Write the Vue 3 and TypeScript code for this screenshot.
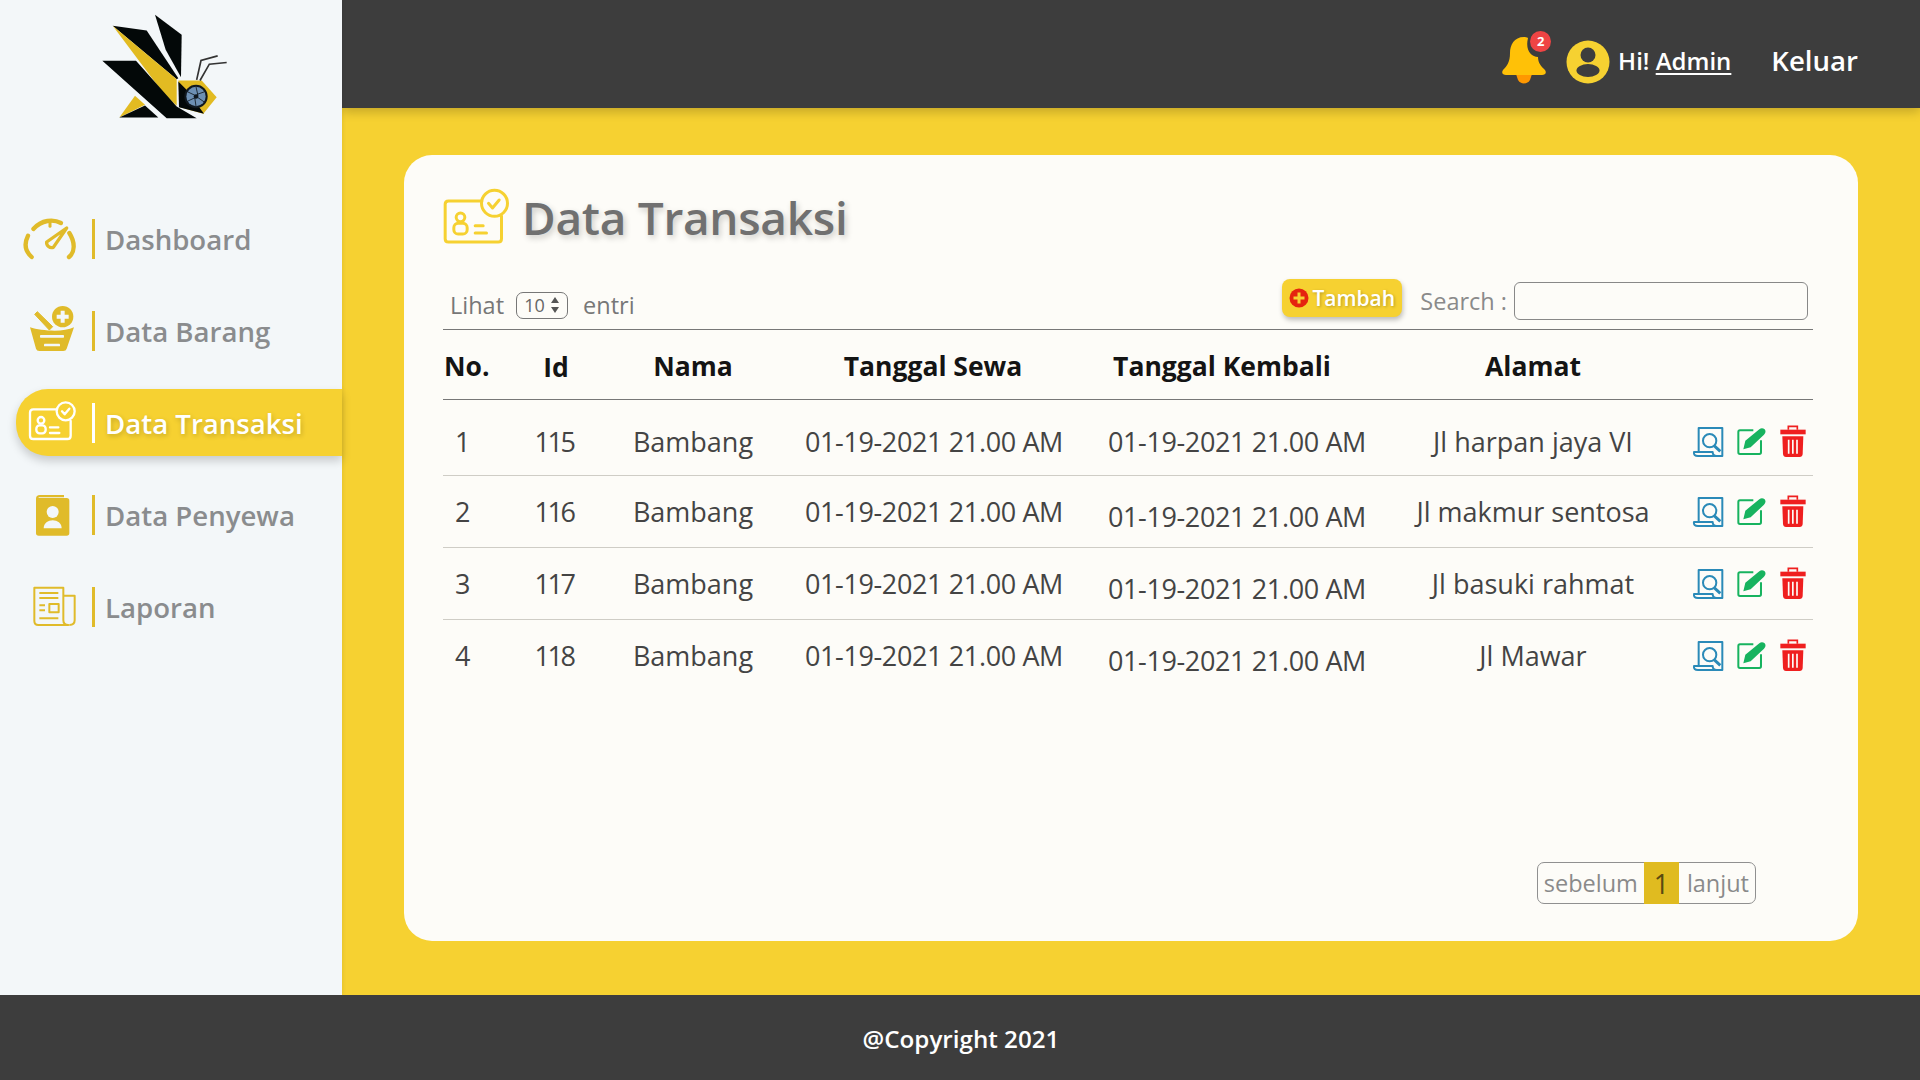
<script setup lang="ts">
interface NavItem { label: string; icon: string; active?: boolean }
interface Row { no: number; id: number; nama: string; alamat: string }

const navItems: NavItem[] = [
  { label: 'Dashboard', icon: 'gauge' },
  { label: 'Data Barang', icon: 'basket' },
  { label: 'Data Transaksi', icon: 'card', active: true },
  { label: 'Data Penyewa', icon: 'book' },
  { label: 'Laporan', icon: 'news' },
]

const date = '01-19-2021 21.00 AM'
const rows: Row[] = [
  { no: 1, id: 115, nama: 'Bambang', alamat: 'Jl harpan jaya VI' },
  { no: 2, id: 116, nama: 'Bambang', alamat: 'Jl makmur sentosa' },
  { no: 3, id: 117, nama: 'Bambang', alamat: 'Jl basuki rahmat' },
  { no: 4, id: 118, nama: 'Bambang', alamat: 'Jl Mawar' },
]
</script>

<template>
  <div class="page">
    <div class="main">
      <aside class="sidebar">
        <svg class="logo" viewBox="300 40 390 320">
          <polygon points="465,45 545,105 543,232 497,150" fill="#030808" />
          <polygon points="338,78 440,92 535,235 530,238" fill="#030808" />
          <polygon points="338,78 530,238 530,318 490,280" fill="#e2bb22" />
          <polygon points="307,183 408,183 530,320 590,355 500,355" fill="#030808" />
          <polygon points="405,288 435,315 358,353" fill="#e2bb22" />
          <polygon points="435,317 475,353 358,353" fill="#030808" />
          <polygon points="535,242 605,242 650,292 610,342 540,322" fill="#e2bb22" />
          <polygon points="535,245 562,272 600,325 612,342 537,322" fill="#030808" />
          <circle cx="588" cy="290" r="35" fill="#10181f" />
          <circle cx="588" cy="290" r="29" fill="#6d90b4" />
          <g stroke="#10181f" stroke-width="2.5">
            <line x1="588" y1="261" x2="594" y2="288" />
            <line x1="613" y1="276" x2="590" y2="284" />
            <line x1="612" y1="306" x2="592" y2="292" />
            <line x1="588" y1="319" x2="584" y2="292" />
            <line x1="563" y1="304" x2="584" y2="294" />
            <line x1="563" y1="276" x2="584" y2="286" />
          </g>
          <circle cx="588" cy="290" r="7" fill="#10181f" />
          <polyline points="590,240 603,182 653,168" fill="none" stroke="#333" stroke-width="5" />
          <polyline points="600,242 628,193 680,188" fill="none" stroke="#333" stroke-width="5" />
        </svg>

        <nav class="nav">
          <div v-for="item in navItems" :key="item.label" class="nav-item" :class="{ active: item.active }">
            <span class="nav-icon">
              <svg v-if="item.icon === 'gauge'" width="60" height="50" viewBox="60 43 180 150" fill="none" stroke="currentColor" stroke-width="13" stroke-linecap="round">
                <path d="M95 172 C76 155 72 132 84 108" />
                <path d="M100 88 C125 60 160 58 183 70" />
                <path d="M208 100 C227 130 224 158 207 172" />
                <path d="M150 68 V80" stroke-width="9" />
                <path d="M200 85 L160 143 A15 15 0 0 1 140 127 Z" stroke-width="10" stroke-linejoin="round" />
              </svg>
              <svg v-else-if="item.icon === 'basket'" width="60" height="50" viewBox="60 320 180 150" fill="currentColor">
                <path d="M104 345 L112 337 L158 382 L148 392 Z" stroke="currentColor" stroke-width="3" />
                <circle cx="188" cy="352" r="32" />
                <path d="M182 334 H194 V346 H206 V358 H194 V370 H182 V358 H170 V346 H182 Z" fill="#f3f7f9" />
                <path d="M90 384 C125 395 190 400 222 384 L200 448 Q198 455 190 455 H118 Q110 455 108 448 Z" />
                <rect x="120" y="407" width="72" height="8" rx="2" fill="#f3f7f9" />
                <rect x="132" y="433" width="48" height="8" rx="2" fill="#f3f7f9" />
              </svg>
              <svg v-else-if="item.icon === 'card'" width="60" height="50" viewBox="60 55 180 150" fill="none" stroke="currentColor" stroke-width="7" stroke-linejoin="round" stroke-linecap="round">
                <path d="M168 89 H100 Q90 89 90 99 V168 Q90 178 100 178 H202 Q212 178 212 168 V124" />
                <circle cx="197" cy="95" r="27" />
                <path d="M186 95 L194 104 L208 87" />
                <circle cx="123" cy="122" r="10" />
                <rect x="109" y="137" width="28" height="24" rx="10" />
                <path d="M150 143 H175 M150 160 H178" />
              </svg>
              <svg v-else-if="item.icon === 'book'" width="60" height="50" viewBox="60 330 180 150">
                <path d="M108 356 Q108 345 120 345 H192 V352 H116 V354 H200 Q208 354 208 362 V460 Q208 467 200 467 H116 Q108 467 108 460 Z" fill="currentColor" />
                <circle cx="158" cy="396" r="18" fill="#f3f7f9" />
                <path d="M131 445 C131 413 185 413 185 445 Z" fill="#f3f7f9" />
              </svg>
              <svg v-else width="60" height="50" viewBox="60 607 180 150" fill="none" stroke="currentColor" stroke-width="6" stroke-linejoin="round">
                <path d="M103 624 H190 V722 Q190 736 205 736 H115 Q103 736 103 724 Z" />
                <path d="M190 648 H224 V722 Q224 736 208 736" />
                <path d="M118 640 H175 M118 655 H175 M118 677 H135 M118 692 H135 M118 716 H175" stroke-width="6" />
                <rect x="148" y="673" width="28" height="25" stroke-width="6" />
              </svg>
            </span>
            <span class="nav-sep"></span>
            <span class="nav-label">{{ item.label }}</span>
          </div>
        </nav>
      </aside>

      <div class="content">
        <header class="topbar">
          <span class="bell">
            <svg width="44" height="48" viewBox="0 0 44 48">
              <path d="M16 44 A7 7 0 0 0 28 44 L30 38 H14 Z" fill="#ff9800" />
              <path d="M22 1 C12 1 8 9 8 17 C8 26 5 30 1 34 C-1 37 1 39 4 39 H40 C43 39 45 37 43 34 C39 30 36 27 36 21 C29 21 23 14 26 2 C25 1 23 1 22 1 Z" fill="#ffc107" />
            </svg>
            <span class="badge">2</span>
          </span>
          <svg class="avatar" width="44" height="44" viewBox="0 0 44 44">
            <circle cx="22" cy="22" r="21.500" fill="#f6d131" />
            <circle cx="22" cy="15" r="7.500" fill="#3d3d3d" />
            <ellipse cx="22" cy="30.500" rx="11.500" ry="6.500" fill="#3d3d3d" />
          </svg>
          <span class="hi">Hi! <u>Admin</u></span>
          <span class="logout">Keluar</span>
        </header>

        <div class="body">
          <section class="card">
            <div class="title-row">
              <svg class="title-icon" width="67" height="56" viewBox="70 52 200 168" fill="none" stroke="currentColor" stroke-width="9" stroke-linejoin="round" stroke-linecap="round">
                <path d="M186 91 H86 Q76 91 76 101 V204 Q76 214 86 214 H235 Q245 214 245 204 V136" />
                <circle cx="224" cy="98" r="39" />
                <path d="M206 98 L218 112 L238 88" />
                <circle cx="122" cy="140" r="13" />
                <rect x="102" y="158" width="40" height="32" rx="13" />
                <path d="M166 165 H190 M166 187 H200" />
              </svg>
              <h1>Data Transaksi</h1>
            </div>

            <div class="toolbar">
              <div class="entries">
                <span>Lihat</span>
                <span class="select">10
                  <svg width="10" height="18" viewBox="0 0 10 18" fill="#555"><path d="M5 1 L9 7 H1 Z M5 17 L1 11 H9 Z" /></svg>
                </span>
                <span>entri</span>
              </div>
              <div class="tools">
                <button class="add" type="button">
                  <svg width="20" height="20" viewBox="0 0 20 20">
                    <circle cx="10" cy="10" r="9.500" fill="#e5230f" />
                    <path d="M8.500 4.500 H11.500 V8.500 H15.500 V11.500 H11.500 V15.500 H8.500 V11.500 H4.500 V8.500 H8.500 Z" fill="#f6d131" />
                  </svg>
                  Tambah
                </button>
                <label class="search">Search :</label>
                <input class="search-input" type="text" />
              </div>
            </div>

            <table class="grid">
              <colgroup>
                <col class="c1" /><col class="c2" /><col class="c3" /><col class="c4" /><col class="c5" /><col class="c6" /><col class="c7" />
              </colgroup>
              <thead>
                <tr>
                  <th class="left">No.</th>
                  <th class="id-head">Id</th>
                  <th>Nama</th>
                  <th>Tanggal Sewa</th>
                  <th class="back-head">Tanggal Kembali</th>
                  <th>Alamat</th>
                  <th></th>
                </tr>
              </thead>
              <tbody>
                <tr v-for="r in rows" :key="r.id" :class="{ first: r.no === 1 }">
                  <td class="no">{{ r.no }}</td>
                  <td class="id">{{ r.id }}</td>
                  <td>{{ r.nama }}</td>
                  <td class="date out">{{ date }}</td>
                  <td class="date low">{{ date }}</td>
                  <td>{{ r.alamat }}</td>
                  <td>
                    <div class="actions">
                      <svg width="32.670" height="32.670" viewBox="96 50 98 98" fill="none" stroke="#2a8ab8" stroke-width="6" stroke-linejoin="round">
                        <path d="M116 126 V56 H187 V140 H114 Q100 140 102 128 H158 Q158 140 170 140" />
                        <circle cx="149" cy="94" r="20" />
                        <path d="M163 110 L181 126" stroke-width="9" />
                      </svg>
                      <svg width="30.670" height="30" viewBox="228 55 92 90">
                        <path d="M280 65 H240 Q235 65 235 70 V131 Q235 136 240 136 H298 Q303 136 303 131 V95" fill="none" stroke="#17b35f" stroke-width="6" />
                        <path d="M250 122 L256 96 L298 62 Q306 55 314 62 Q320 70 312 78 L272 116 Z" fill="#17b35f" />
                      </svg>
                      <svg width="28" height="34.670" viewBox="356 46 84 104">
                        <path d="M384 60 V50 H411 V60" fill="none" stroke="#ef1f1f" stroke-width="5" />
                        <path d="M360 60 H436 V74 H360 Z" fill="#ef1f1f" />
                        <path d="M366 80 H429 L427 133 Q426 142 418 142 H377 Q369 142 368 133 Z" fill="#ef1f1f" />
                        <path d="M385 90 V132 M397.500 90 V132 M410 90 V132" stroke="#fdfcf8" stroke-width="5" />
                      </svg>
                    </div>
                  </td>
                </tr>
              </tbody>
            </table>

            <div class="pager-row">
              <div class="pager">
                <span class="pg prev">sebelum</span>
                <span class="pg current">1</span>
                <span class="pg next">lanjut</span>
              </div>
            </div>
          </section>
        </div>
      </div>
    </div>
    <footer class="footer">@Copyright 2021</footer>
  </div>
</template>

<style scoped>
.page {
  width: 1920px;
  height: 1080px;
  display: flex;
  flex-direction: column;
  overflow: hidden;
  font-family: "Open Sans", "Noto Sans", sans-serif;
  background: #f6d131;
}
.main { flex: 1; display: flex; min-height: 0; }
.sidebar {
  width: 342px;
  flex: none;
  background: #f3f7f9;
  box-shadow: 1px 0 4px rgba(0, 0, 0, 0.08);
  z-index: 2;
}
.logo { display: block; width: 130px; height: 107px; margin: 13px 0 0 100px; }
.nav { display: flex; flex-direction: column; gap: 25px; margin: 85px 0 0 16px; }
.nav-item {
  height: 67px;
  display: flex;
  align-items: center;
  border-radius: 32px 0 0 32px;
  color: #e0bb2a;
}
.nav-item.active {
  background: #f6d131;
  color: #fff;
  box-shadow: 0 5px 10px rgba(0, 0, 0, 0.18);
}
.nav-icon { width: 76px; box-sizing: border-box; padding-right: 8px; display: flex; justify-content: center; flex: none; }
.nav-sep { width: 3px; height: 40px; background: currentColor; flex: none; }
.nav-label {
  margin: 1px 0 0 10px;
  font-size: 27.600px;
  font-weight: 600;
  color: #8a8c8e;
  white-space: nowrap;
}
.active .nav-label { color: #fff; text-shadow: 1px 2px 5px rgba(0, 0, 0, 0.2); }

.content { flex: 1; display: flex; flex-direction: column; min-width: 0; }
.topbar {
  height: 108px;
  flex: none;
  background: #3d3d3d;
  box-shadow: 0 4px 10px rgba(0, 0, 0, 0.2);
  display: flex;
  align-items: center;
  justify-content: flex-end;
  padding: 0 62px 0 0;
  color: #fff;
  z-index: 1;
}
.bell { position: relative; width: 44px; height: 48px; margin-right: 20px; margin-top: 12px; }
.bell svg { display: block; }
.badge {
  position: absolute;
  top: -5px;
  right: -5px;
  width: 21px;
  height: 21px;
  border-radius: 50%;
  background: #ef4444;
  font-size: 13px;
  font-weight: 700;
  line-height: 21px;
  text-align: center;
}
.avatar { margin-top: 16px; margin-right: 8px; }
.hi { font-size: 24px; font-weight: 600; margin-top: 12px; margin-right: 40px; white-space: nowrap; }
.hi u { text-underline-offset: 3px; text-decoration-thickness: 2px; }
.logout { font-size: 27.600px; font-weight: 600; margin-top: 12px; }

.body { flex: 1; min-height: 0; padding: 47px 62px 54px 62px; display: flex; }
.card {
  flex: 1;
  background: #fdfcf8;
  border-radius: 28px;
  padding: 30px 44px 37px 39px;
  display: flex;
  flex-direction: column;
  color: #444;
}
.title-row { display: flex; align-items: center; gap: 12px; height: 64px; }
.title-icon { color: #f6d131; flex: none; margin-top: -2px; }
h1 {
  margin: 0;
  font-size: 46px;
  letter-spacing: -0.3px;
  font-weight: 600;
  color: #707070;
  text-shadow: 2px 3px 6px rgba(0, 0, 0, 0.2);
  white-space: nowrap;
}
.toolbar {
  height: 80px;
  display: flex;
  justify-content: space-between;
  align-items: flex-end;
  font-size: 23.500px;
  color: #777;
}
.entries { display: flex; align-items: center; padding: 0 0 8px 7px; gap: 12px; }
.select {
  width: 52px;
  height: 27px;
  box-sizing: border-box;
  border: 1px solid #777;
  border-radius: 7px;
  display: inline-flex;
  align-items: center;
  justify-content: center;
  gap: 5px;
  font-size: 18px;
  color: #666;
}
.entries span:last-child { margin-left: 3px; }
.tools { display: flex; align-items: center; padding: 0 6px 7px 0; }
.add {
  width: 120px;
  height: 38px;
  padding: 0;
  border: none;
  border-radius: 8px;
  background: #f6d131;
  box-shadow: 1px 3px 5px rgba(0, 0, 0, 0.25);
  color: #fff;
  font: 600 21px "Open Sans", sans-serif;
  text-shadow: 1px 1px 3px rgba(0, 0, 0, 0.25);
  display: flex;
  align-items: center;
  justify-content: center;
  gap: 3px;
  margin: 0 18px 5px 0;
}
.search { color: #8a8a8a; margin-right: 7px; white-space: nowrap; }
.search-input {
  width: 294px;
  height: 38px;
  box-sizing: border-box;
  border: 1px solid #888;
  border-radius: 6px;
  background: transparent;
}
.grid {
  width: 1370px;
  table-layout: fixed;
  border-collapse: collapse;
  border-top: 1px solid #777;
}
.c1 { width: 67px; } .c2 { width: 92px; } .c3 { width: 182px; } .c4 { width: 298px; }
.c5 { width: 310px; } .c6 { width: 282px; } .c7 { width: 139px; }
th {
  height: 70px;
  box-sizing: border-box;
  padding: 2px 0 0;
  font-size: 26.500px;
  font-weight: 700;
  color: #141414;
  border-bottom: 1px solid #777;
  white-space: nowrap;
}
th.left { text-align: left; padding-left: 1px; }
.id-head { padding-top: 4px; }
.back-head { padding-right: 30px; }
td {
  height: 72px;
  padding: 0;
  box-sizing: border-box;
  font-size: 27px;
  color: #444;
  text-align: center;
  white-space: nowrap;
  border-bottom: 1px solid #cfcdc6;
}
.first td { height: 76px; padding-top: 8px; }
td.no { text-align: left; padding-left: 12px; }
td.id { letter-spacing: -2.500px; padding-right: 4px; }
td.date { letter-spacing: -0.370px; }
td.out { padding-left: 2px; }
tr:not(.first) td.low { padding-top: 10px; }
tbody tr:last-child td { border-bottom: none; }
.actions { display: flex; justify-content: flex-end; align-items: center; gap: 12px; padding: 1px 6px 0 0; }
.pager-row { margin-top: auto; display: flex; justify-content: flex-end; padding-right: 58px; }
.pager {
  display: flex;
  height: 42px;
  box-sizing: border-box;
  border: 1px solid #909090;
  border-radius: 7px;
  font-size: 23.500px;
  color: #8a8a8a;
}
.pg { line-height: 41px; white-space: nowrap; }
.prev { padding: 0 6px; }
.next { padding: 0 6px 0 8px; }
.current { background: #e0bb20; color: #5a4a10; width: 35px; text-align: center; margin: -1px 0; line-height: 43px; font-size: 27px; }
.footer {
  height: 85px;
  flex: none;
  background: #3d3d3d;
  color: #fff;
  font-size: 24.200px;
  font-weight: 600;
  display: flex;
  align-items: center;
  justify-content: center;
  padding: 2px 0 0 2px;
  box-sizing: border-box;
  z-index: 3;
}
</style>
